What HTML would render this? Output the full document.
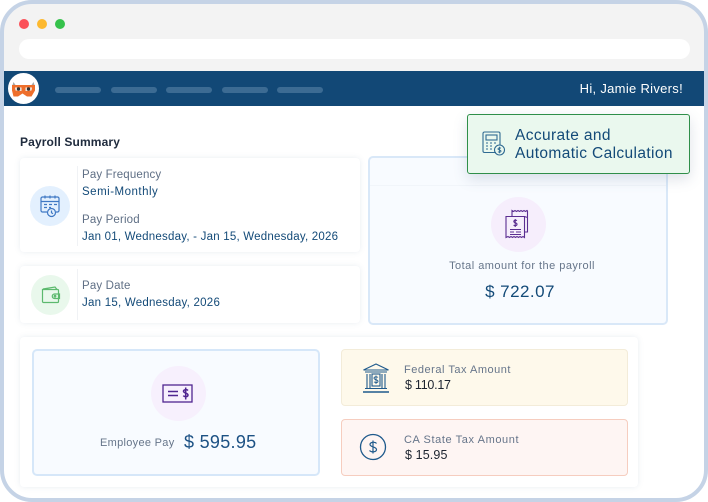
<!DOCTYPE html>
<html><head><meta charset="utf-8"><style>
html,body{margin:0;padding:0;background:#fff}
body{width:708px;height:502px;position:relative;overflow:hidden;font-family:"Liberation Sans",sans-serif}
div,span,svg{position:absolute;box-sizing:border-box}
.t{white-space:nowrap;line-height:14px}
.l{font-size:11.5px;color:#5f6f85;letter-spacing:.15px}
.v{font-size:11.5px;color:#134a78;letter-spacing:.22px}
.card{background:#fff;border-radius:4px;box-shadow:0 0 6px rgba(120,140,170,.16)}
.pill{top:87px;width:46px;height:6px;border-radius:3px;background:#3c6b93}
</style></head><body>
<div style="left:2px;top:2px;width:704px;height:69px;background:#f3f3f3;border-radius:30px 30px 0 0"></div>
<div style="left:19px;top:39px;width:671px;height:20px;border-radius:10px;background:#fff"></div>
<div style="left:19px;top:19px;width:10px;height:10px;border-radius:50%;background:#fb5058"></div>
<div style="left:37px;top:19px;width:10px;height:10px;border-radius:50%;background:#fdb92f"></div>
<div style="left:55px;top:19px;width:10px;height:10px;border-radius:50%;background:#35c24b"></div>
<div style="left:4px;top:71px;width:700px;height:35px;background:#124876"></div>
<div class="pill" style="left:55px"></div><div class="pill" style="left:111px"></div><div class="pill" style="left:166px"></div><div class="pill" style="left:222px"></div><div class="pill" style="left:277px"></div>
<div style="left:8px;top:73px;width:31px;height:31px;border-radius:50%;background:#fff"></div>
<svg style="left:8px;top:73px" width="31" height="31" viewBox="0 0 31 31"><path d="M4.500 12l1-3 2 3zM26.500 12l-1-3-2 3z" fill="#a8a8a8"/><path d="M4 12h23v5.500l-3.500 6h-4.500l-4.500-3-4.500 3H5.500L4 17.500z" fill="#ee6f2c"/><path d="M7 14.500h6.500v3.500L7.500 17.500zM17.500 14.500H24l-.5 3-6 .5z" fill="#f4efe9"/><circle cx="10.500" cy="16" r="1.700" fill="#333"/><circle cx="20.500" cy="16" r="1.700" fill="#333"/></svg>
<div class="t" style="right:25px;top:82px;color:#fff;font-size:13px;letter-spacing:.3px">Hi, Jamie Rivers!</div>

<div class="t" style="left:20px;top:135px;font-size:12px;font-weight:bold;color:#202c3e;letter-spacing:.13px">Payroll Summary</div>

<div class="card" style="left:20px;top:158px;width:340px;height:94px"></div>
<div style="left:77px;top:166px;width:1px;height:80px;background:#f0f2f5"></div>
<div style="left:30px;top:186px;width:40px;height:40px;border-radius:50%;background:#e3f0fe"></div>
<svg style="left:40px;top:194px" width="21" height="24" viewBox="0 0 21 24" fill="none" stroke="#3f78c4" stroke-width="1.200"><path d="M7 18H2.500A1.500 1.500 0 0 1 1 16.500V4.500A1.500 1.500 0 0 1 2.500 3h15A1.500 1.500 0 0 1 19 4.500v12a1.500 1.500 0 0 1-1.500 1.500H16M1 7.500h18M5 1.500v3M10 1.500v3M15 1.500v3M4 10.500h3M9 10.500h3M14 10.500h3M4 13.500h3M9 13.500h2"/><circle cx="11.500" cy="18.500" r="4"/><path d="M11.500 16.500v2.200l1.500 1"/></svg>
<div class="t l" style="left:82px;top:167px;top:168px">Pay Frequency</div>
<div class="t v" style="left:82px;top:185px;letter-spacing:.5px">Semi-Monthly</div>
<div class="t l" style="left:82px;top:213px">Pay Period</div>
<div class="t v" style="left:82px;top:230px">Jan 01, Wednesday, - Jan 15, Wednesday, 2026</div>

<div class="card" style="left:20px;top:266px;width:340px;height:57px"></div>
<div style="left:77px;top:269px;width:1px;height:51px;background:#f0f2f5"></div>
<div style="left:31px;top:275px;width:39px;height:40px;border-radius:50%;background:#e9f8ec"></div>
<svg style="left:41px;top:286px" width="20" height="18" viewBox="0 0 20 18" fill="none" stroke="#5cb96e" stroke-width="1.200"><path d="M2 3L14 1l2 2.500M1.500 3.500h15a1 1 0 0 1 1 1v11a1 1 0 0 1-1 1h-14a1 1 0 0 1-1-1zM18.500 8h-5a2 2 0 0 0 0 4.500h5z"/><circle cx="14" cy="10.200" r=".8"/></svg>
<div class="t l" style="left:82px;top:279px">Pay Date</div>
<div class="t v" style="left:82px;top:296px;letter-spacing:.24px">Jan 15, Wednesday, 2026</div>

<div style="left:368px;top:156px;width:300px;height:169px;background:#f8fbff;border:2px solid #d9e8f8;border-radius:5px"></div>
<div style="left:370px;top:185px;width:296px;height:1px;background:#f1f5fa"></div>
<div style="left:491px;top:197px;width:55px;height:55px;border-radius:50%;background:#f6eefc"></div>
<svg style="left:505px;top:209px" width="27" height="30" viewBox="0 0 27 30" fill="none" stroke="#5b2d91" stroke-width="1.100"><path d="M1 7.500h18.500v21l-1.500-1-1.500 1-1.500-1-1.500 1-1.500-1-1.500 1-1.500-1-1.500 1-1.500-1-1.500 1-1.500-1L1 28.500zM7 7V1.500l1.500 1 1.500-1 1.500 1 1.500-1 1.500 1 1.500-1 1.500 1 1.500-1 1.500 1 1.500-1 .5.500V23H20M19.500 7.500l3 1V23"/><path d="M5 20.500h11M5 23h4M11 23h5M5 25.500h11" /><path d="M12 11.500c-2.500-1-3.500.5-3 1.500s3 .7 3 2.200-2 1.800-3.500 1M10.200 10v8"/></svg>
<div class="t" style="left:368px;width:308px;text-align:center;top:259px;font-size:11px;color:#66758a;letter-spacing:.47px">Total amount for the payroll</div>
<div class="t" style="left:370px;width:300px;text-align:center;top:283px;line-height:17px;font-size:17px;color:#134a78;letter-spacing:.45px">$ 722.07</div>

<div style="left:467px;top:114px;width:223px;height:60px;background:#eaf8ee;border:1.500px solid #2f8f49;border-radius:3px;box-shadow:0 5px 14px rgba(90,110,140,.2)"></div>
<svg style="left:482px;top:131px" width="24" height="26" viewBox="0 0 24 26" fill="none" stroke="#2f6a92" stroke-width="1.100"><path d="M14 21.500H2.500a1.500 1.500 0 0 1-1.500-1.500V2.500A1.500 1.500 0 0 1 2.500 1h14A1.500 1.500 0 0 1 18 2.500V14"/><rect x="4" y="4" width="11" height="5"/><path d="M4 12h2M8 12h2M12 12h2M4 15h2M8 15h2M4 18h2M8 18h2"/><circle cx="17.500" cy="19" r="5"/><path d="M19 17.300c-1-.7-3-.5-3 .7s3 .9 3 2.100-2 1.400-3 .6M17.500 15.800v6.400" stroke-width=".9"/></svg>
<div class="t" style="left:515px;top:127px;font-size:15.500px;line-height:18px;color:#134a78;letter-spacing:.38px">Accurate and<br>Automatic Calculation</div>

<div class="card" style="left:20px;top:337px;width:618px;height:150px"></div>
<div style="left:32px;top:349px;width:288px;height:127px;background:#f8fbff;border:2px solid #d6e7f9;border-radius:5px"></div>
<div style="left:151px;top:366px;width:55px;height:55px;border-radius:50%;background:#f7f0fd"></div>
<svg style="left:162px;top:384px" width="32" height="20" viewBox="0 0 32 20" fill="none" stroke="#4f2590"><rect x="1" y="1" width="29" height="17" stroke-width="1.300"/><path d="M6 7.500h10M6 11.500h10" stroke-width="1.600"/><path d="M26 6.500c-1-1.200-4.500-1.200-4.500.8s4.500 1.500 4.500 3.700-3.500 2-4.700.6M23.700 3.500v12" stroke-width="1.500"/></svg>
<div class="t" style="left:100px;top:436px;font-size:11px;color:#66758a;letter-spacing:.3px">Employee Pay</div>
<div class="t" style="left:184px;top:433px;line-height:18px;font-size:18px;color:#1c5184;letter-spacing:.3px">$ 595.95</div>

<div style="left:341px;top:349px;width:287px;height:57px;background:#fef9eb;border:1.500px solid #f3ecd9;border-radius:4px"></div>
<svg style="left:362px;top:362px" width="28" height="31" viewBox="0 0 28 31" fill="none" stroke="#1f5a8c" stroke-width="1.100"><path d="M1.500 8L14 2l12.500 6zM3 10h22M5 12v14M8 12v14M20 12v14M23 12v14M3 26.500h22"/><path d="M1 30h26" stroke-width="1.400"/><rect x="10" y="12" width="8" height="12"/><path d="M16 15.500c-.8-1-4-1-4 .7s4 1.200 4 3-3 1.500-4 .6M14 13.500v8.500" stroke-width=".9"/></svg>
<div class="t" style="left:404px;top:363px;font-size:11px;color:#66758a;letter-spacing:.52px">Federal Tax Amount</div>
<div class="t" style="left:405px;top:378px;font-size:12.500px;color:#1d2430;letter-spacing:-.25px">$ 110.17</div>

<div style="left:341px;top:419px;width:287px;height:57px;background:#fef5f3;border:1.500px solid #f6cdbf;border-radius:4px"></div>
<svg style="left:359px;top:433px" width="28" height="28" viewBox="0 0 28 28" fill="none" stroke="#1f5a8c"><circle cx="14" cy="14" r="12.500" stroke-width="1.300"/><path d="M17.500 10.500c-1-1.700-6.500-1.700-6.500 1 0 2.800 6.500 2 6.500 5s-5.500 2.800-7 1M14 7.500v13" stroke-width="1.200"/></svg>
<div class="t" style="left:404px;top:433px;font-size:11px;color:#66758a;letter-spacing:.6px">CA State Tax Amount</div>
<div class="t" style="left:405px;top:448px;font-size:12.500px;color:#1d2430;letter-spacing:.12px">$ 15.95</div>

<div style="left:0;top:0;width:708px;height:502px;border:4px solid #c5d3e6;border-radius:32px"></div>
</body></html>
